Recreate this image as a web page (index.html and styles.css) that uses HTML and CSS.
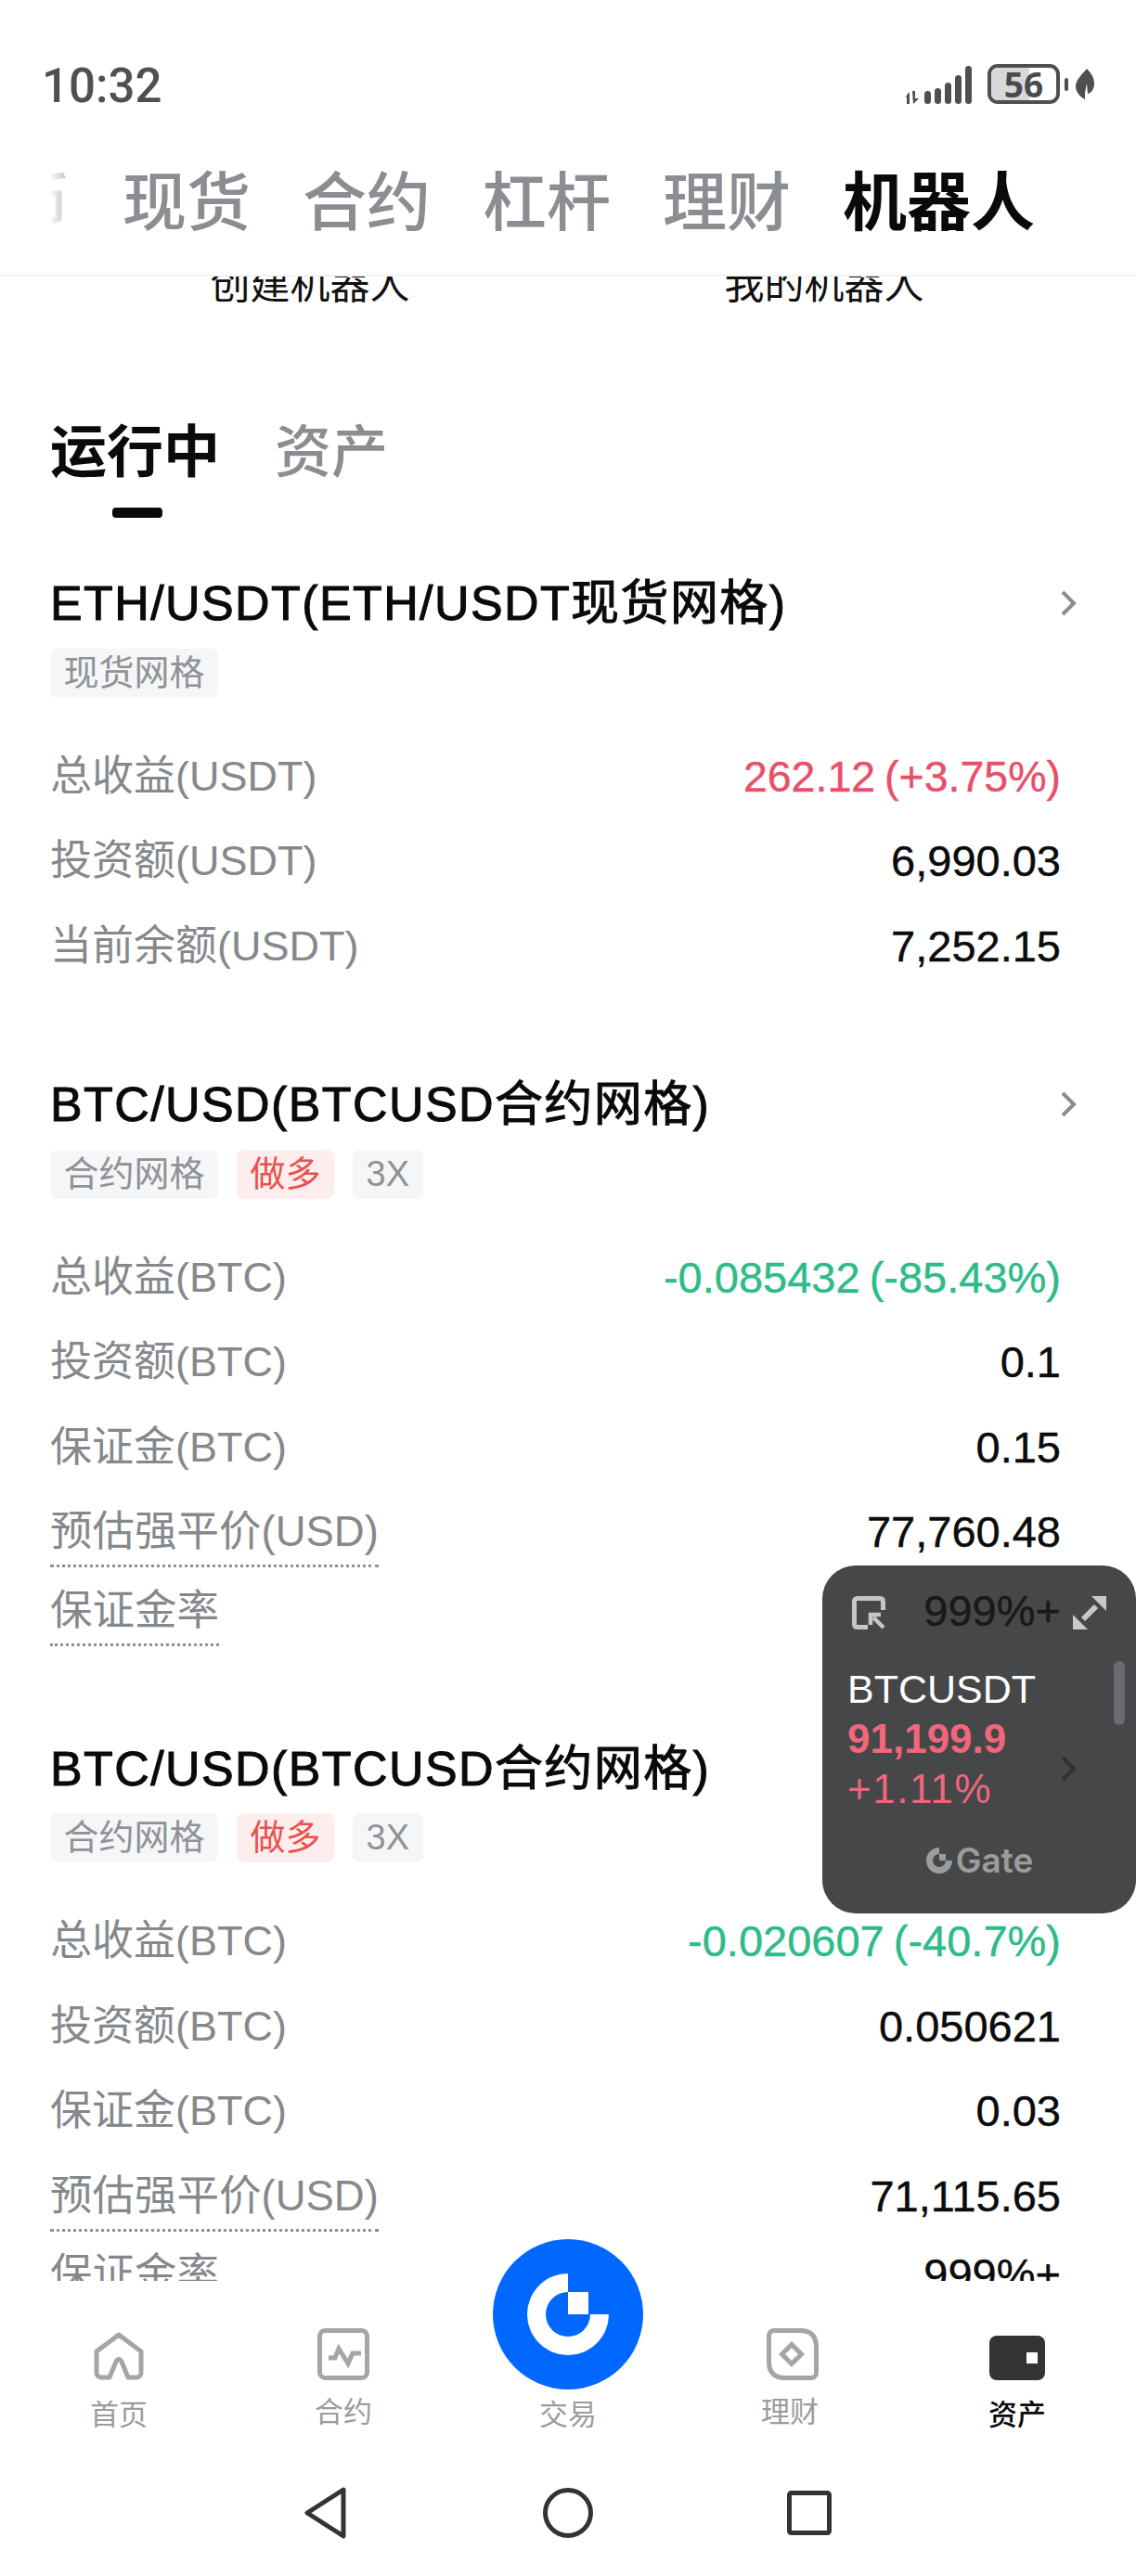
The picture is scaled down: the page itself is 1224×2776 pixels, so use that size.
FILE: index.html
```html
<!DOCTYPE html>
<html lang="zh">
<head>
<meta charset="utf-8">
<title>机器人</title>
<link rel="stylesheet" href="styles.css">
</head>
<body>
<div class="app">
  <header class="top">
    <div class="status">
      <span class="clock">10:32</span>
      <div class="status-icons">
        <svg class="signal" viewBox="0 0 74 41"><g fill="#4f4f51"><path d="M0 34l5-6v13H2V33zM8 27h3v8l4 0-6 6z"/><rect x="21" y="27" width="7" height="14" rx="3.5"/><rect x="32" y="24" width="7" height="17" rx="3.5"/><rect x="43" y="18" width="7" height="23" rx="3.5"/><rect x="54" y="10" width="7" height="31" rx="3.5"/><rect x="65" y="0" width="7" height="41" rx="3.5"/></g></svg>
        <div class="battery"><span class="battery-fill"></span><span class="battery-text">56</span></div>
        <span class="battery-nub"></span>
        <svg class="leaf" viewBox="0 0 20 33"><path fill="#4f4f51" d="M12 0c5 5 8 10 8 16 0 6-3 10-7 11l-1-11-2 10 0 7C5 31 0 25 0 19 0 12 7 6 12 0z"/></svg>
      </div>
    </div>
    <nav class="tabs">
      <span class="tab">买币</span><span class="tab">现货</span><span class="tab">合约</span><span class="tab">杠杆</span><span class="tab">理财</span><span class="tab tab-on">机器人</span>
      <span class="tab-fade"></span>
    </nav>
  </header>

  <main class="scroll">
    <div class="actions"><span>创建机器人</span><span>我的机器人</span></div>
    <div class="subtabs">
      <div class="subtab subtab-on"><span>运行中</span><i class="subtab-bar"></i></div>
      <div class="subtab"><span>资产</span></div>
    </div>

    <section class="card">
      <div class="card-head"><h2>ETH/USDT(ETH/USDT现货网格)</h2><svg class="chev" viewBox="0 0 18 28"><path d="M2 2l12 12L2 26" fill="none" stroke="#8a8c8e" stroke-width="4"/></svg></div>
      <div class="tags"><span class="tag">现货网格</span></div>
      <div class="rows">
        <div class="row"><span class="label">总收益(USDT)</span><span class="value up-c">262.12 (+3.75%)</span></div>
        <div class="row"><span class="label">投资额(USDT)</span><span class="value">6,990.03</span></div>
        <div class="row"><span class="label">当前余额(USDT)</span><span class="value">7,252.15</span></div>
      </div>
    </section>

    <section class="card">
      <div class="card-head"><h2>BTC/USD(BTCUSD合约网格)</h2><svg class="chev" viewBox="0 0 18 28"><path d="M2 2l12 12L2 26" fill="none" stroke="#8a8c8e" stroke-width="4"/></svg></div>
      <div class="tags"><span class="tag">合约网格</span><span class="tag tag-red">做多</span><span class="tag">3X</span></div>
      <div class="rows">
        <div class="row"><span class="label">总收益(BTC)</span><span class="value down-c">-0.085432 (-85.43%)</span></div>
        <div class="row"><span class="label">投资额(BTC)</span><span class="value">0.1</span></div>
        <div class="row"><span class="label">保证金(BTC)</span><span class="value">0.15</span></div>
        <div class="row"><span class="label dotted">预估强平价(USD)</span><span class="value">77,760.48</span></div>
        <div class="row row-tight"><span class="label dotted">保证金率</span><span class="value">999%+</span></div>
      </div>
    </section>

    <section class="card">
      <div class="card-head"><h2>BTC/USD(BTCUSD合约网格)</h2><svg class="chev" viewBox="0 0 18 28"><path d="M2 2l12 12L2 26" fill="none" stroke="#8a8c8e" stroke-width="4"/></svg></div>
      <div class="tags"><span class="tag">合约网格</span><span class="tag tag-red">做多</span><span class="tag">3X</span></div>
      <div class="rows">
        <div class="row"><span class="label">总收益(BTC)</span><span class="value down-c">-0.020607 (-40.7%)</span></div>
        <div class="row"><span class="label">投资额(BTC)</span><span class="value">0.050621</span></div>
        <div class="row"><span class="label">保证金(BTC)</span><span class="value">0.03</span></div>
        <div class="row"><span class="label dotted">预估强平价(USD)</span><span class="value">71,115.65</span></div>
        <div class="row row-tight"><span class="label dotted">保证金率</span><span class="value">999%+</span></div>
      </div>
    </section>
  </main>

  <aside class="float">
    <div class="float-top">
      <svg class="float-ico" viewBox="0 0 36 36"><path d="M33.500 15V6q0-3.500-3.500-3.500H6Q2.500 2.500 2.500 6v24q0 3.500 3.500 3.500h11" fill="none" stroke="#c6c6c6" stroke-width="5"/><path d="M34 34L23 23M20 31V20h11" fill="none" stroke="#c6c6c6" stroke-width="4.500"/></svg>
      <svg class="float-ico" viewBox="0 0 36 36"><path fill="#c9c9c9" d="M36 0v16L20 0zM0 36V20l16 16z"/><path d="M11 25l14-14" stroke="#c9c9c9" stroke-width="6"/></svg>
    </div>
    <div class="float-sym">BTCUSDT</div>
    <div class="float-price">91,199.9</div>
    <div class="float-pct">+1.11%</div>
    <div class="float-brand"><svg class="brand-ico" viewBox="0 0 88 88"><path fill="#9b9c9e" d="M44 0A44 44 0 1 0 88 44H66A22 22 0 1 1 44 22z"/><path fill="#9b9c9e" d="M44 22h22v22H44z"/></svg><span>Gate</span></div>
    <i class="float-scroll"></i>
  </aside>

  <footer class="bottom">
    <nav class="nav">
      <div class="nav-item">
        <div class="nav-ico"><svg width="54" height="52" viewBox="0 0 54 52"><path d="M27 3L51 21V44a5 5 0 0 1-5 5H37L30 32q-3-5-6 0L17 49H8a5 5 0 0 1-5-5V21z" fill="none" stroke="#a3a5a7" stroke-width="5" stroke-linejoin="round"/></svg></div>
        <span class="nav-label">首页</span>
      </div>
      <div class="nav-item">
        <div class="nav-ico"><svg width="56" height="56" viewBox="0 0 56 56"><rect x="2.500" y="2.500" width="51" height="51" rx="6" fill="none" stroke="#a3a5a7" stroke-width="5"/><path d="M12 32h7l4-10 10 16 5-11h9" fill="none" stroke="#a3a5a7" stroke-width="5"/></svg></div>
        <span class="nav-label nav-label-up">合约</span>
      </div>
      <div class="nav-item">
        <div class="nav-ico"></div>
        <span class="nav-label">交易</span>
      </div>
      <div class="nav-item nav-item-left">
        <div class="nav-ico"><svg width="56" height="56" viewBox="0 0 56 56"><path d="M8 2.500H36Q53.500 2.500 53.500 20V48a5.500 5.500 0 0 1-5.500 5.500H20Q2.500 53.500 2.500 36V8A5.500 5.500 0 0 1 8 2.500z" fill="none" stroke="#a3a5a7" stroke-width="5"/><path d="M27 17.500L37.500 28 27 38.500 16.500 28z" fill="none" stroke="#a3a5a7" stroke-width="5"/></svg></div>
        <span class="nav-label nav-label-up">理财</span>
      </div>
      <div class="nav-item nav-item-on">
        <div class="nav-ico"><svg width="60" height="48" viewBox="0 0 60 48"><rect width="60" height="48" rx="8" fill="#323335"/><rect x="40" y="18" width="12" height="12" fill="#fff"/></svg></div>
        <span class="nav-label">资产</span>
      </div>
    </nav>
    <div class="trade-btn"><svg width="88" height="88" viewBox="0 0 88 88"><path fill="#fff" d="M44 0A44 44 0 1 0 88 44H68A24 24 0 1 1 44 20z"/><path fill="#fff" d="M44 20h22v24H44z"/></svg></div>
    <div class="sysbar">
      <svg width="60" height="60" viewBox="0 0 60 60"><path d="M48 5L9 30l39 25z" fill="none" stroke="#333" stroke-width="5" stroke-linejoin="round"/></svg>
      <svg width="60" height="60" viewBox="0 0 60 60"><circle cx="30" cy="30" r="24.500" fill="none" stroke="#333" stroke-width="5"/></svg>
      <svg width="60" height="60" viewBox="0 0 60 60"><rect x="8.500" y="8.500" width="43" height="43" rx="2" fill="none" stroke="#333" stroke-width="5"/></svg>
    </div>
  </footer>
</div>
</body>
</html>
```
FILE: styles.css
```css
* { box-sizing: border-box; }
html, body { margin: 0; padding: 0; background: #fff; }
body { font-family: "Liberation Sans", "Noto Sans CJK SC", sans-serif; color: #0b0b0c; }

.app { position: relative; width: 1224px; height: 2776px; overflow: hidden; display: flex; flex-direction: column; background: #fff; }

/* header */
.top { flex: none; height: 298px; border-bottom: 2px solid #f2f2f2; background: #fff; position: relative; z-index: 2; }
.status { height: 144px; padding: 71px 45px 0; display: flex; justify-content: space-between; align-items: flex-start; }
.clock { font-family: Roboto, "Liberation Sans", sans-serif; font-size: 51px; font-weight: 500; line-height: 44px; color: #505052; }
.status-icons { display: flex; align-items: flex-start; width: 204px; margin-top: -2px; }
.signal { width: 74px; height: 41px; margin-top: 2px; }
.battery { position: relative; width: 78px; height: 43px; margin-left: 15px; border: 4px solid #4f4f51; border-radius: 11px; overflow: hidden; display: flex; align-items: center; justify-content: center; }
.battery-fill { position: absolute; left: 0; top: 0; bottom: 0; width: 41px; background: #d8d8d8; }
.battery-text { position: relative; font-family: "Noto Sans", "Liberation Sans", sans-serif; font-weight: 700; font-size: 37px; line-height: 36px; color: #4a4a4c; }
.battery-nub { width: 4px; height: 14px; margin: 15px 0 0 5px; background: #4f4f51; border-radius: 2px; }
.leaf { width: 20px; height: 33px; margin: 5px 0 0 8px; }

.tabs { position: relative; display: flex; gap: 56px; margin-left: -62px; height: 80px; margin-top: 36px; }
.tab { font-size: 69px; line-height: 80px; font-weight: 500; color: #8a8d91; white-space: nowrap; }
.tab-on { color: #0a0a0b; font-weight: 700; }
.tab-fade { position: absolute; left: 0; top: 0; bottom: 0; width: 142px; background: linear-gradient(to right, #fff 0, #fff 115px, rgba(255,255,255,.45) 134px, rgba(255,255,255,0) 142px); }

/* scrolling area */
.scroll { flex: 1 1 auto; min-height: 0; overflow: hidden; padding: 0 81px 0 54px; }
.actions { display: grid; grid-template-columns: 1fr 1fr; margin: -16px -22px 0 3px; font-size: 43px; line-height: 50px; text-align: center; color: #111; }
.subtabs { display: flex; gap: 59px; margin-top: 121px; align-items: flex-start; }
.subtab { display: flex; flex-direction: column; align-items: center; font-size: 61px; line-height: 70px; font-weight: 500; color: #8a8d91; }
.subtab-on { color: #0a0a0b; font-weight: 700; }
.subtab-bar { width: 54px; height: 11px; margin: 24px 0 0 4px; border-radius: 4px; background: #0a0a0b; }

.card { margin-top: 62px; margin-bottom: 95px; }
.card + .card { margin-top: 0; }
.card-head { display: flex; justify-content: space-between; align-items: center; height: 60px; margin-right: -18px; }
.card-head h2 { margin: 0; font-size: 52px; line-height: 60px; letter-spacing: 1.400px; font-weight: 400; -webkit-text-stroke: 1px #0a0a0b; color: #0a0a0b; white-space: nowrap; }
.chev { width: 18px; height: 28px; flex: none; }

.tags { display: flex; gap: 20px; margin-top: 18.500px; }
.tag { height: 53px; padding: 0 14.500px; border-radius: 8px; background: #f5f6f7; color: #8f9296; font-size: 38px; line-height: 53px; }
.tag-red { background: #fdeeed; color: #e9524f; }

.rows { margin-top: 39px; }
.row { display: flex; justify-content: space-between; align-items: flex-start; height: 91.500px; padding-top: 14px; }
.row-tight { height: 84px; padding-top: 7px; }
.label { font-size: 45px; line-height: 64px; color: #85888c; white-space: nowrap; }
.dotted { font-size: 45.500px; padding-bottom: 3px; border-bottom: 3px dotted #8d9094; }
.value { font-size: 47px; line-height: 64px; word-spacing: -3px; color: #0b0b0c; white-space: nowrap; -webkit-text-stroke: 0.4px currentColor; }
.up-c { color: #e8506a; font-size: 46.500px; }
.down-c { color: #2fbb88; }

/* floating ticker */
.float { position: absolute; left: 886px; top: 1687px; width: 338px; height: 375px; border-radius: 36px; background: rgba(26,28,30,.81); padding: 33px 32px 0 27px; display: flex; flex-direction: column; z-index: 3; color: #fff; }
.float-top { display: flex; justify-content: space-between; height: 37px; padding-left: 5px; }
.float-ico { width: 36px; height: 36px; }
.float-sym { margin-top: 38px; font-size: 43px; line-height: 50px; color: #fff; }
.float-price { margin-top: 4px; font-size: 44px; line-height: 50px; font-weight: 700; color: #f0667b; }
.float-pct { margin-top: 4px; font-size: 44px; line-height: 50px; letter-spacing: 1.500px; color: #f0667b; }
.float-brand { display: flex; align-items: center; justify-content: center; gap: 4px; margin-top: 35px; padding-left: 6px; font-family: Inter, Roboto, sans-serif; font-weight: 600; font-size: 37px; line-height: 34px; color: #9b9c9e; }
.brand-ico { width: 28px; height: 28px; }
.float-scroll { position: absolute; right: 12px; top: 103px; width: 12px; height: 69px; border-radius: 6px; background: #696b72; }

/* bottom nav */
.bottom { flex: none; position: relative; height: 318px; background: #fff; z-index: 2; }
.nav { display: grid; grid-template-columns: repeat(5, 242px); padding: 47px 7px 0; height: 168px; }
.nav-item { display: flex; flex-direction: column; align-items: center; }
.nav-item-left .nav-label { margin-left: -6px; }
.nav-ico { height: 60px; display: flex; align-items: flex-end; }
.nav-label { margin-top: 18px; font-size: 31px; line-height: 40px; color: #9a9c9f; }
.nav-label-up { margin-top: 15px; }
.nav-item-on .nav-label { color: #0a0a0b; font-weight: 500; }
.trade-btn { position: absolute; left: 531px; top: -45px; width: 162px; height: 162px; border-radius: 50%; background: #0068ff; display: flex; align-items: center; justify-content: center; }
.sysbar { display: flex; justify-content: center; gap: 200px; padding-top: 52px; }
```
